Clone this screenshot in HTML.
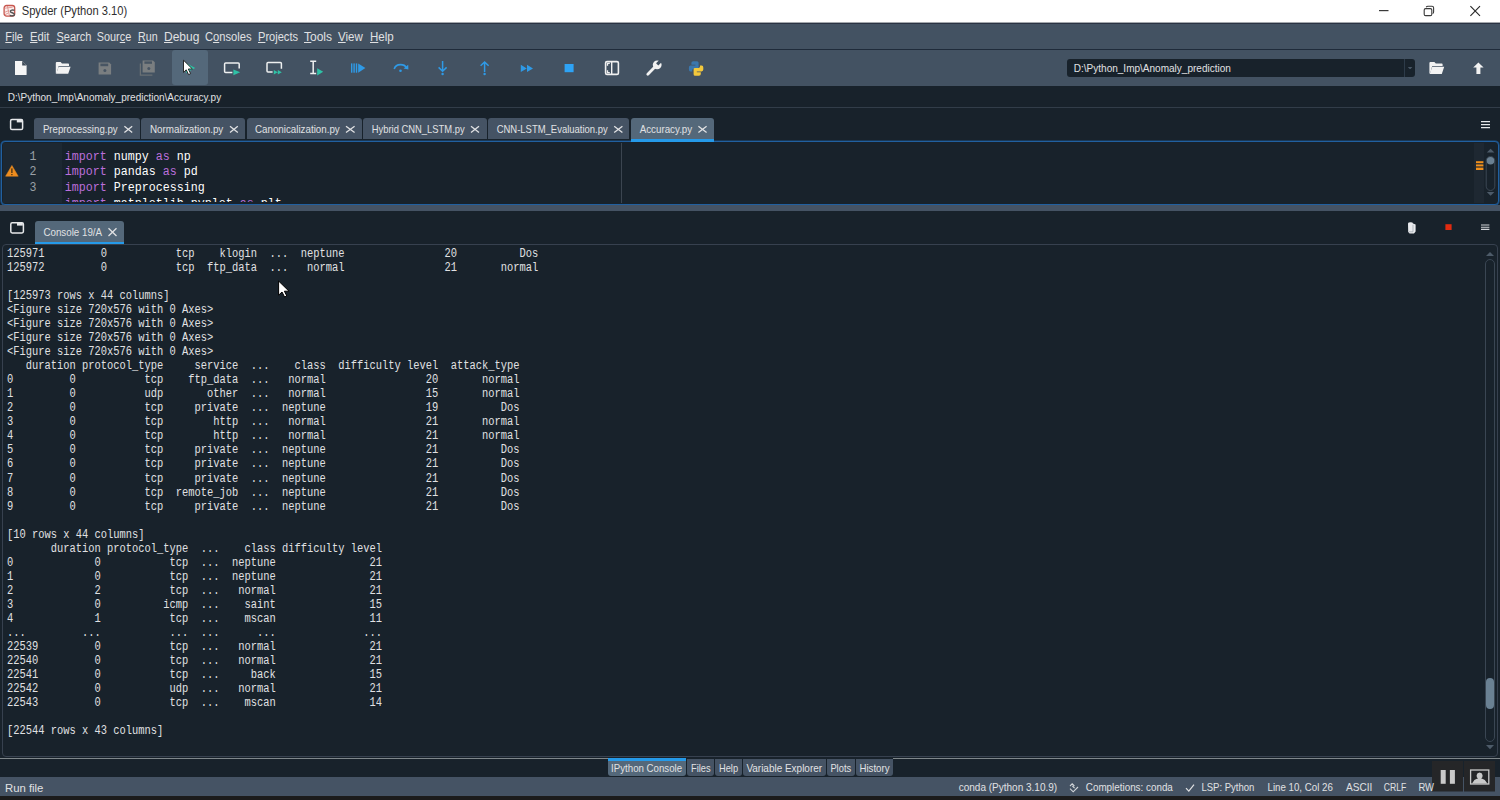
<!DOCTYPE html>
<html><head><meta charset="utf-8">
<title>Spyder (Python 3.10)</title>
<style>
*{margin:0;padding:0;box-sizing:border-box}
html,body{width:1500px;height:800px;overflow:hidden;background:#18222B;font-family:"Liberation Sans",sans-serif;color:#E0E1E3;position:relative}
.a{position:absolute}
.tab{position:absolute;top:118px;height:21px;background:#455364;border-radius:3px 3px 0 0}
svg{position:absolute;left:0;top:0}
text{font-family:"Liberation Sans",sans-serif;white-space:pre}
text.m{font-family:"Liberation Mono",monospace;font-size:12px;fill:#E0E1E3}
text.c{font-family:"Liberation Mono",monospace;font-size:12px}
</style></head><body>
<!-- title bar -->
<div class="a" style="left:0;top:0;width:1500px;height:22px;background:#fff"></div>
<div class="a" style="left:0;top:22px;width:1500px;height:1px;background:#a4a8ad"></div>
<div class="a" style="left:0;top:23px;width:1500px;height:1px;background:#2a3343"></div>
<!-- menubar -->
<div class="a" style="left:0;top:24px;width:1500px;height:25px;background:#435262"></div>
<div class="a" style="left:0;top:49px;width:1500px;height:1px;background:#1f2b3a"></div>
<!-- toolbar -->
<div class="a" style="left:0;top:50px;width:1500px;height:36px;background:#435262"></div>
<div class="a" style="left:172px;top:50px;width:36px;height:35px;background:#54687A;border-radius:3px"></div>
<div class="a" style="left:1067px;top:59px;width:348px;height:18px;background:#18222B;border-radius:3px"></div>
<div class="a" style="left:1404px;top:59px;width:1px;height:18px;background:#2d3b49"></div>
<!-- path sep -->
<div class="a" style="left:0;top:107px;width:1500px;height:1px;background:#323d49"></div>

<!-- editor tabs -->
<div class="tab" style="left:34px;width:106px"></div>
<div class="tab" style="left:141px;width:104px"></div>
<div class="tab" style="left:247px;width:115px"></div>
<div class="tab" style="left:363px;width:124px"></div>
<div class="tab" style="left:488px;width:141px"></div>
<div class="tab" style="left:631px;width:83px;height:22px;background:#54687A"></div>

<!-- editor -->
<div class="a" style="left:1px;top:141px;width:1498px;height:64px;border:1px solid #2160a0;box-shadow:0 0 0 0.6px #1b4f82;border-radius:4px;background:#18222B;overflow:hidden">
  <div class="a" style="left:1px;top:1px;width:59px;height:60px;background:#1d2832"></div>
  <div class="a" style="left:1472px;top:1px;width:10px;height:60px;background:#1e2832"></div>
  <div class="a" style="left:619px;top:1px;width:1px;height:60px;background:#3b4550"></div>
</div>

<div class="a" style="left:631px;top:138.6px;width:83px;height:3.2px;background:#259AE9"></div>
<!-- splitter -->
<div class="a" style="left:0;top:205px;width:1500px;height:6px;background:#455364"></div>

<!-- console tab -->
<div class="a" style="left:35px;top:221px;width:89px;height:24px;background:#54687A;border-radius:3px 3px 0 0"></div>
<div class="a" style="left:35px;top:242px;width:89px;height:3px;background:#259AE9"></div>

<!-- console pane -->
<div class="a" style="left:2px;top:244px;width:1496px;height:513px;border:1px solid #37414F;border-radius:4px"></div>
<!-- scrollbar -->
<div class="a" style="left:1485px;top:259px;width:10px;height:483px;border:1px solid #3a4653;border-radius:5px"></div>
<div class="a" style="left:1486px;top:678px;width:8px;height:31px;background:#6a8193;border-radius:4px"></div>

<!-- dock tabs -->
<div class="a" style="left:0;top:758px;width:1500px;height:1px;background:#7f878b"></div>
<div class="a" style="left:608px;top:758px;width:78px;height:17.5px;background:#54687A;border-radius:0 0 3px 3px"></div>
<div class="a" style="left:608px;top:758px;width:78px;height:2.5px;background:#259AE9"></div>
<div class="a" style="left:687px;top:759px;width:27px;height:17px;background:#455364;border-radius:0 0 3px 3px"></div>
<div class="a" style="left:715px;top:759px;width:27px;height:17px;background:#455364;border-radius:0 0 3px 3px"></div>
<div class="a" style="left:743px;top:759px;width:83px;height:17px;background:#455364;border-radius:0 0 3px 3px"></div>
<div class="a" style="left:827px;top:759px;width:28px;height:17px;background:#455364;border-radius:0 0 3px 3px"></div>
<div class="a" style="left:856px;top:759px;width:37px;height:17px;background:#455364;border-radius:0 0 3px 3px"></div>
<div class="a" style="left:686px;top:758px;width:207px;height:1px;background:#18222B"></div>

<!-- status -->
<div class="a" style="left:0;top:777px;width:1500px;height:19px;background:#455364"></div>
<div class="a" style="left:0;top:796px;width:1500px;height:4px;background:#1c1c1c"></div>

<svg width="1500" height="800" viewBox="0 0 1500 800">
<defs>
<clipPath id="edclip"><rect x="2" y="142" width="617" height="60"/></clipPath>
</defs>
<!-- spyder logo -->
<rect x="4.1" y="5.5" width="10.6" height="10.6" rx="2.4" fill="#fbeeed" stroke="#c8574f" stroke-width="1.3"/>
<path d="M5,8.2 L12.6,7.2 M7.4,6 L9.4,15.6 M5,12.2 L9.2,10.4 M5,14.6 L8.4,13" stroke="#dc8a84" stroke-width="0.8" fill="none"/>
<path d="M14.6,10.4 C12.8,9.6 10.2,10 10.4,11.6 C10.6,13 14.4,12.6 14.4,14.4 C14.4,16 11.6,16.2 9.8,15.4" stroke="#555" stroke-width="1.4" fill="none"/>
<!-- window controls -->
<rect x="1379" y="10" width="9.5" height="1.2" fill="#3a3a3a"/>
<rect x="1424.2" y="8.6" width="7.6" height="7" rx="1.4" fill="none" stroke="#3a3a3a" stroke-width="1.1"/>
<path d="M1426.2,7.2 Q1426.6,6.2 1428,6.2 L1432,6.2 Q1433.6,6.2 1433.6,7.8 L1433.6,12 Q1433.6,13.2 1432.6,13.6" fill="none" stroke="#3a3a3a" stroke-width="1.1"/>
<path d="M1470.4,6.2 L1480,15.8 M1480,6.2 L1470.4,15.8" stroke="#2a2a2a" stroke-width="1.15"/>

<!-- toolbar: new file -->
<path d="M15,61 L22.2,61 L26.6,65.4 L26.6,74.4 Q26.6,75 26,75 L15.6,75 Q15,75 15,74.4 Z" fill="#f5f5f5"/>
<path d="M22.2,61 L26.6,65.4 L22.2,65.4 Z" fill="#3f4b58"/>
<!-- open folder -->
<path d="M55.8,63 Q55.8,62 56.8,62 L60.6,62 L62,63.4 L68.2,63.4 Q69,63.4 69,64.2 L69,66 L58.6,66 L56.6,73.4 L55.8,73.4 Z" fill="#f2f2f2"/>
<path d="M58.6,66.8 L70.6,66.8 L68.2,73.8 L56.2,73.8 Z" fill="#f2f2f2"/>
<!-- save (disabled) -->
<path d="M98.6,62.6 L109.2,62.6 L111.1,64.5 L111.1,74.4 L98.6,74.4 Z" fill="#7a7e80"/>
<rect x="100.4" y="63.6" width="7.8" height="2.6" fill="#485563"/>
<circle cx="104.9" cy="70.6" r="1.5" fill="#485563"/>
<!-- save all (disabled) -->
<path d="M142.6,60.4 L153,60.4 L154.8,62.2 L154.8,72.6 L142.6,72.6 Z" fill="#7a7e80"/>
<rect x="144.4" y="61.4" width="7.6" height="2.4" fill="#485563"/>
<circle cx="148.8" cy="68.4" r="1.5" fill="#485563"/>
<path d="M140.4,63.6 L140.4,75.2 L152.4,75.2" fill="none" stroke="#6a7074" stroke-width="1.3"/>
<!-- run file (with mouse cursor) -->
<path d="M186,63 L195.2,68 L186,73 Z" fill="#2fc1a6"/>
<path d="M183.5,60.2 L183.5,72.4 L186.2,69.8 L188.6,74.6 L190.6,73.6 L188.3,69 L192.4,69 Z" fill="#ffffff" stroke="#1a1a1a" stroke-width="0.9" stroke-linejoin="round"/>
<!-- run cell -->
<path d="M232.4,72.6 L225.6,72.6 Q224.6,72.6 224.6,71.6 L224.6,63.9 Q224.6,62.9 225.6,62.9 L238.2,62.9 Q239.2,62.9 239.2,63.9 L239.2,68.4" fill="none" stroke="#eef0f0" stroke-width="1.5"/>
<path d="M233.4,69.4 L240.2,72.3 L233.4,75.2 Z" fill="#2fc1a6"/>
<!-- run cell & advance -->
<path d="M272.6,71.9 L268,71.9 Q267,71.9 267,70.9 L267,63.5 Q267,62.5 268,62.5 L280.4,62.5 Q281.4,62.5 281.4,63.5 L281.4,68.8" fill="none" stroke="#eef0f0" stroke-width="1.5"/>
<path d="M273.8,70 L277.8,72.3 L273.8,74.6 Z M277.8,70 L281.8,72.3 L277.8,74.6 Z" fill="#2fc1a6"/>
<!-- run selection -->
<path d="M310.2,61.2 L316.2,61.2 M313.2,61.2 L313.2,73.6 M310.2,73.6 L316.2,73.6" fill="none" stroke="#eef0f0" stroke-width="1.5"/>
<path d="M317.2,68.2 L323.2,71.8 L317.2,75.4 Z" fill="#2fc1a6"/>
<!-- debug file -->
<rect x="351" y="63.4" width="1.4" height="9.3" fill="#2f9ae6"/>
<rect x="353.4" y="63.4" width="1.4" height="9.3" fill="#2f9ae6"/>
<rect x="355.8" y="63.4" width="1.4" height="9.3" fill="#2f9ae6"/>
<path d="M358.2,63.4 L365.4,68 L358.2,72.7 Z" fill="#2f9ae6"/>
<!-- step over -->
<path d="M394.2,69 Q395.4,64.6 400.6,64.6 Q404.8,64.6 406.4,67.6" fill="none" stroke="#2f9ae6" stroke-width="1.6"/>
<path d="M403.6,68.4 L408.4,69.6 L408.2,64.8 Z" fill="#2f9ae6"/>
<circle cx="400.5" cy="70.8" r="1.3" fill="#2f9ae6"/>
<!-- step into -->
<path d="M442.6,61 L442.6,71.2 M438.6,67.4 L442.6,71.2 L446.6,67.4" fill="none" stroke="#2f9ae6" stroke-width="1.5"/>
<circle cx="442.6" cy="74" r="1.2" fill="#2f9ae6"/>
<!-- step return -->
<path d="M484.6,62 L484.6,72 M480.6,65.8 L484.6,62 L488.6,65.8" fill="none" stroke="#2f9ae6" stroke-width="1.5"/>
<circle cx="484.6" cy="74" r="1.2" fill="#2f9ae6"/>
<!-- continue -->
<path d="M520.8,64.7 L526.8,68.4 L520.8,72.1 Z M527,64.7 L533,68.4 L527,72.1 Z" fill="#2f9ae6"/>
<!-- stop -->
<rect x="564.6" y="64" width="9" height="8.2" fill="#2ea3f5"/>
<!-- maximize pane -->
<rect x="605.6" y="61.6" width="12.8" height="12.8" rx="1.4" fill="none" stroke="#f0f0f0" stroke-width="1.6"/>
<rect x="611" y="61.6" width="1.4" height="12.8" fill="#f0f0f0"/>
<path d="M609.8,63.4 L607.5,63.4 L607.5,65.8 M607.5,70.2 L607.5,72.6 L609.8,72.6" fill="none" stroke="#f0f0f0" stroke-width="1.3"/>
<!-- wrench -->
<path d="M647.8,74.2 L654.4,67.6" stroke="#f2f2f2" stroke-width="2.8" stroke-linecap="round"/>
<circle cx="657.2" cy="64.8" r="4.4" fill="#f2f2f2"/>
<rect x="657.6" y="59.6" width="3.2" height="5.6" fill="#435262" transform="rotate(45 659.2 62.4)"/>
<!-- python logo -->
<path d="M691.4,63 Q691.4,61.2 693.2,61.2 L697,61.2 Q698.6,61.2 698.6,62.8 L698.6,67.6 Q698.6,69 697.2,69 L693.6,69 Q692.2,69 692.2,70.4 L692.2,71.6 L690.4,71.6 Q688.9,71.6 688.9,69.6 L688.9,67.4 Q688.9,65.6 690.6,65.6 L695.4,65.6 L695.4,64.8 L691.4,64.8 Z" fill="#3b77ad"/>
<path d="M700.8,74 Q700.8,75.8 699,75.8 L695.2,75.8 Q693.6,75.8 693.6,74.2 L693.6,69.4 Q693.6,68 695,68 L698.6,68 Q700,68 700,66.6 L700,65.4 L701.8,65.4 Q703.3,65.4 703.3,67.4 L703.3,69.6 Q703.3,71.4 701.6,71.4 L696.8,71.4 L696.8,72.2 L700.8,72.2 Z" fill="#f3c83c"/>
<!-- cwd dropdown arrow -->
<path d="M1407.8,67.2 L1412.4,67.2 L1410.1,69 Z" fill="#5a6a7a"/>
<!-- browse folder -->
<path d="M1429.4,63 Q1429.4,62 1430.4,62 L1434.4,62 L1435.8,63.4 L1441.8,63.4 Q1442.6,63.4 1442.6,64.2 L1442.6,66 L1432.2,66 L1430.2,73.6 L1429.4,73.6 Z" fill="#f2f2f2"/>
<path d="M1432.2,66.8 L1444.2,66.8 L1441.8,74 L1429.8,74 Z" fill="#f2f2f2"/>
<!-- parent dir arrow -->
<path d="M1478.4,62.4 L1483.6,67.6 L1480.4,67.6 L1480.4,74 L1476.4,74 L1476.4,67.6 L1473.2,67.6 Z" fill="#f2f2f2"/>

<!-- editor tabbar: pane icon -->
<rect x="10.6" y="119.6" width="12" height="10" rx="1.4" fill="none" stroke="#e6e8ea" stroke-width="1.5"/>
<rect x="16.8" y="119.8" width="5.6" height="2.6" fill="#e6e8ea"/>
<!-- tab close X -->
<g stroke="#E0E1E3" stroke-width="1.3" fill="none">
<path d="M124.4,126.2 L132.2,132.6 M132.2,126.2 L124.4,132.6"/>
<path d="M230,126.2 L237.8,132.6 M237.8,126.2 L230,132.6"/>
<path d="M346,126.2 L354.6,132.6 M354.6,126.2 L346,132.6"/>
<path d="M471,126.2 L479,132.6 M479,126.2 L471,132.6"/>
<path d="M614.2,126.2 L622.4,132.6 M622.4,126.2 L614.2,132.6"/>
<path d="M698.4,126.2 L706.6,132.6 M706.6,126.2 L698.4,132.6"/>
<path d="M108.5,228.2 L116.5,236 M116.5,228.2 L108.5,236"/>
</g>
<!-- editor hamburger -->
<path d="M1481,121.6 L1490,121.6 M1481,124.6 L1490,124.6 M1481,127.6 L1490,127.6" stroke="#e6e8ea" stroke-width="1.2"/>
<!-- warning triangle -->
<path d="M11.9,165.4 L18.2,176.2 L5.6,176.2 Z" fill="#ee8d1f" stroke="#ee8d1f" stroke-width="0.5" stroke-linejoin="round"/>
<rect x="11.3" y="168.4" width="1.2" height="4.6" fill="#3a2a10"/>
<rect x="11.3" y="174" width="1.2" height="1.2" fill="#3a2a10"/>
<!-- editor scroll flags -->
<rect x="1476" y="161.2" width="7.4" height="2" fill="#f0901c"/>
<rect x="1476" y="164.4" width="7.4" height="2" fill="#f0901c"/>
<rect x="1476" y="167.6" width="7.4" height="2.4" fill="#f0901c"/>
<!-- editor scrollbar -->
<path d="M1486.8,152.6 L1490.6,148.8 L1494.4,152.6 Z" fill="#4d5b69"/>
<path d="M1486.8,192 L1490.6,195.8 L1494.4,192 Z" fill="#4d5b69"/>
<rect x="1486.2" y="156.5" width="8.6" height="34" rx="4.3" fill="none" stroke="#3c4855" stroke-width="1"/>
<circle cx="1490.5" cy="160.8" r="3.8" fill="#6a8092"/>

<!-- console header icons -->
<rect x="10.8" y="222.8" width="12.6" height="10.2" rx="1.4" fill="none" stroke="#e6e8ea" stroke-width="1.5"/>
<rect x="17" y="223" width="5.8" height="2.6" fill="#e6e8ea"/>
<path d="M1408,223.6 Q1408,222.2 1410.6,222.2 Q1413,222.2 1413,223.4 L1415.6,224.6 L1415.6,231.6 L1414,233.4 L1409.6,233.4 L1408.2,232 Z" fill="#e9ebee"/>
<path d="M1413,224.8 L1413,231.8 L1409,231.8" fill="none" stroke="#9aa2aa" stroke-width="0.7"/>
<rect x="1445.4" y="224.2" width="6.2" height="5.8" fill="#e02b10"/>
<path d="M1481,225 L1489.4,225 M1481,227.2 L1489.4,227.2 M1481,229.4 L1489.4,229.4" stroke="#cfd3d7" stroke-width="1.1"/>

<!-- console scrollbar arrows -->
<path d="M1486,256 L1490,252 L1494,256 Z" fill="#4d5b69"/>
<path d="M1486,745 L1490,749.2 L1494,745 Z" fill="#4d5b69"/>

<!-- mouse cursor -->
<path d="M278.6,281 L278.6,295.2 L282,292 L284.6,297 L286.8,296 L284.4,291.2 L289,291.2 Z" fill="#ffffff" stroke="#000" stroke-width="1" stroke-linejoin="round"/>

<!-- status icons -->
<path d="M1070,786 L1072.2,783.8 L1074.4,786 M1074.6,788.2 L1072.4,786 M1070,788.6 L1073.2,791.8 L1078,787" fill="none" stroke="#d0d4d8" stroke-width="1.1"/>
<path d="M1186,788.2 L1188.8,791.2 L1194,784.6" fill="none" stroke="#e0e1e3" stroke-width="1.2"/>
<!-- overlay buttons -->
<rect x="1432" y="761" width="31" height="30.5" fill="#252628"/>
<rect x="1464" y="761" width="31" height="30.5" fill="#252628"/>
<rect x="1440.7" y="770" width="5" height="13.8" fill="#c9c9c9"/>
<rect x="1449.9" y="770" width="5" height="13.8" fill="#c9c9c9"/>
<rect x="1470.6" y="770" width="18.2" height="14" fill="none" stroke="#c9c9c9" stroke-width="1.3"/>
<path d="M1472,783.4 L1474.4,780 Q1476.4,778.8 1478,778.6 Q1476.4,777.4 1476.6,775.2 Q1477,772.6 1479.6,772.6 Q1482.2,772.6 1482.6,775.2 Q1482.8,777.4 1481.2,778.6 Q1482.8,778.8 1484.8,780 L1487.4,783.4 Z" fill="#c9c9c9"/>

<text x="21.70" y="15.4" font-size="12" fill="#2e2e2e" textLength="105.50" lengthAdjust="spacingAndGlyphs">Spyder (Python 3.10)</text>
<text x="5.30" y="40.7" font-size="12" fill="#E0E1E3" textLength="17.60" lengthAdjust="spacingAndGlyphs">File</text>
<text x="30.00" y="40.7" font-size="12" fill="#E0E1E3" textLength="19.38" lengthAdjust="spacingAndGlyphs">Edit</text>
<text x="56.50" y="40.7" font-size="12" fill="#E0E1E3" textLength="34.82" lengthAdjust="spacingAndGlyphs">Search</text>
<text x="96.80" y="40.7" font-size="12" fill="#E0E1E3" textLength="34.40" lengthAdjust="spacingAndGlyphs">Source</text>
<text x="138.00" y="40.7" font-size="12" fill="#E0E1E3" textLength="19.60" lengthAdjust="spacingAndGlyphs">Run</text>
<text x="164.00" y="40.7" font-size="12" fill="#E0E1E3" textLength="35.37" lengthAdjust="spacingAndGlyphs">Debug</text>
<text x="205.00" y="40.7" font-size="12" fill="#E0E1E3" textLength="46.50" lengthAdjust="spacingAndGlyphs">Consoles</text>
<text x="258.00" y="40.7" font-size="12" fill="#E0E1E3" textLength="40.00" lengthAdjust="spacingAndGlyphs">Projects</text>
<text x="304.00" y="40.7" font-size="12" fill="#E0E1E3" textLength="28.00" lengthAdjust="spacingAndGlyphs">Tools</text>
<text x="338.00" y="40.7" font-size="12" fill="#E0E1E3" textLength="24.68" lengthAdjust="spacingAndGlyphs">View</text>
<text x="370.00" y="40.7" font-size="12" fill="#E0E1E3" textLength="23.69" lengthAdjust="spacingAndGlyphs">Help</text>
<text x="7.70" y="101.2" font-size="11" fill="#E0E1E3" textLength="213.45" lengthAdjust="spacingAndGlyphs">D:\Python_Imp\Anomaly_prediction\Accuracy.py</text>
<text x="1073.80" y="71.8" font-size="10.5" fill="#E0E1E3" textLength="157.05" lengthAdjust="spacingAndGlyphs">D:\Python_Imp\Anomaly_prediction</text>
<text x="42.90" y="133.3" font-size="11.3" fill="#E0E1E3" textLength="74.80" lengthAdjust="spacingAndGlyphs">Preprocessing.py</text>
<text x="150.00" y="133.3" font-size="11.3" fill="#E0E1E3" textLength="73.29" lengthAdjust="spacingAndGlyphs">Normalization.py</text>
<text x="255.00" y="133.3" font-size="11.3" fill="#E0E1E3" textLength="84.70" lengthAdjust="spacingAndGlyphs">Canonicalization.py</text>
<text x="371.70" y="133.3" font-size="11.3" fill="#E0E1E3" textLength="93.01" lengthAdjust="spacingAndGlyphs">Hybrid CNN_LSTM.py</text>
<text x="496.70" y="133.3" font-size="11.3" fill="#E0E1E3" textLength="111.01" lengthAdjust="spacingAndGlyphs">CNN-LSTM_Evaluation.py</text>
<text x="639.70" y="133.3" font-size="11.3" fill="#E0E1E3" textLength="52.50" lengthAdjust="spacingAndGlyphs">Accuracy.py</text>
<text x="43.40" y="236" font-size="11" fill="#E0E1E3" textLength="58.71" lengthAdjust="spacingAndGlyphs">Console 19/A</text>
<text x="611.12" y="772" font-size="11" fill="#E0E1E3" textLength="70.98" lengthAdjust="spacingAndGlyphs">IPython Console</text>
<text x="691.00" y="772" font-size="11" fill="#E0E1E3" textLength="19.58" lengthAdjust="spacingAndGlyphs">Files</text>
<text x="719.00" y="772" font-size="11" fill="#E0E1E3" textLength="19.10" lengthAdjust="spacingAndGlyphs">Help</text>
<text x="746.40" y="772" font-size="11" fill="#E0E1E3" textLength="75.69" lengthAdjust="spacingAndGlyphs">Variable Explorer</text>
<text x="830.40" y="772" font-size="11" fill="#E0E1E3" textLength="20.78" lengthAdjust="spacingAndGlyphs">Plots</text>
<text x="859.40" y="772" font-size="11" fill="#E0E1E3" textLength="30.16" lengthAdjust="spacingAndGlyphs">History</text>
<text x="5.00" y="792" font-size="11" fill="#E0E1E3" textLength="38.42" lengthAdjust="spacingAndGlyphs">Run file</text>
<text x="958.70" y="791.3" font-size="10.5" fill="#E0E1E3" textLength="98.47" lengthAdjust="spacingAndGlyphs">conda (Python 3.10.9)</text>
<text x="1085.80" y="791.3" font-size="10.5" fill="#E0E1E3" textLength="87.05" lengthAdjust="spacingAndGlyphs">Completions: conda</text>
<text x="1201.40" y="791.3" font-size="10.5" fill="#E0E1E3" textLength="52.95" lengthAdjust="spacingAndGlyphs">LSP: Python</text>
<text x="1267.50" y="791.3" font-size="10.5" fill="#E0E1E3" textLength="65.35" lengthAdjust="spacingAndGlyphs">Line 10, Col 26</text>
<text x="1346.00" y="791.3" font-size="10.5" fill="#E0E1E3" textLength="26.28" lengthAdjust="spacingAndGlyphs">ASCII</text>
<text x="1383.80" y="791.3" font-size="10.5" fill="#E0E1E3" textLength="22.54" lengthAdjust="spacingAndGlyphs">CRLF</text>
<text x="1418.40" y="791.3" font-size="10.5" fill="#E0E1E3" textLength="15.52" lengthAdjust="spacingAndGlyphs">RW</text>
<rect x="5.30" y="42" width="6.67" height="1" fill="#E0E1E3"/>
<rect x="30.00" y="42" width="7.50" height="1" fill="#E0E1E3"/>
<rect x="56.50" y="42" width="7.33" height="1" fill="#E0E1E3"/>
<rect x="119.74" y="42" width="5.43" height="1" fill="#E0E1E3"/>
<rect x="138.00" y="42" width="7.72" height="1" fill="#E0E1E3"/>
<rect x="164.00" y="42" width="8.67" height="1" fill="#E0E1E3"/>
<rect x="213.05" y="42" width="6.20" height="1" fill="#E0E1E3"/>
<rect x="258.00" y="42" width="7.39" height="1" fill="#E0E1E3"/>
<rect x="304.00" y="42" width="7.33" height="1" fill="#E0E1E3"/>
<rect x="338.00" y="42" width="7.66" height="1" fill="#E0E1E3"/>
<rect x="370.00" y="42" width="8.32" height="1" fill="#E0E1E3"/>
<text x="7" y="256.7" class="m" textLength="531.25" lengthAdjust="spacingAndGlyphs" xml:space="preserve">125971         0           tcp    klogin  ...  neptune                20          Dos</text>
<text x="7" y="270.8" class="m" textLength="531.25" lengthAdjust="spacingAndGlyphs" xml:space="preserve">125972         0           tcp  ftp_data  ...   normal                21       normal</text>
<text x="7" y="298.9" class="m" textLength="162.50" lengthAdjust="spacingAndGlyphs" xml:space="preserve">[125973 rows x 44 columns]</text>
<text x="7" y="312.9" class="m" textLength="206.25" lengthAdjust="spacingAndGlyphs" xml:space="preserve">&lt;Figure size 720x576 with 0 Axes&gt;</text>
<text x="7" y="326.9" class="m" textLength="206.25" lengthAdjust="spacingAndGlyphs" xml:space="preserve">&lt;Figure size 720x576 with 0 Axes&gt;</text>
<text x="7" y="341.0" class="m" textLength="206.25" lengthAdjust="spacingAndGlyphs" xml:space="preserve">&lt;Figure size 720x576 with 0 Axes&gt;</text>
<text x="7" y="355.1" class="m" textLength="206.25" lengthAdjust="spacingAndGlyphs" xml:space="preserve">&lt;Figure size 720x576 with 0 Axes&gt;</text>
<text x="7" y="369.1" class="m" textLength="512.50" lengthAdjust="spacingAndGlyphs" xml:space="preserve">   duration protocol_type     service  ...    class  difficulty level  attack_type</text>
<text x="7" y="383.1" class="m" textLength="512.50" lengthAdjust="spacingAndGlyphs" xml:space="preserve">0         0           tcp    ftp_data  ...   normal                20       normal</text>
<text x="7" y="397.2" class="m" textLength="512.50" lengthAdjust="spacingAndGlyphs" xml:space="preserve">1         0           udp       other  ...   normal                15       normal</text>
<text x="7" y="411.2" class="m" textLength="512.50" lengthAdjust="spacingAndGlyphs" xml:space="preserve">2         0           tcp     private  ...  neptune                19          Dos</text>
<text x="7" y="425.3" class="m" textLength="512.50" lengthAdjust="spacingAndGlyphs" xml:space="preserve">3         0           tcp        http  ...   normal                21       normal</text>
<text x="7" y="439.4" class="m" textLength="512.50" lengthAdjust="spacingAndGlyphs" xml:space="preserve">4         0           tcp        http  ...   normal                21       normal</text>
<text x="7" y="453.4" class="m" textLength="512.50" lengthAdjust="spacingAndGlyphs" xml:space="preserve">5         0           tcp     private  ...  neptune                21          Dos</text>
<text x="7" y="467.4" class="m" textLength="512.50" lengthAdjust="spacingAndGlyphs" xml:space="preserve">6         0           tcp     private  ...  neptune                21          Dos</text>
<text x="7" y="481.5" class="m" textLength="512.50" lengthAdjust="spacingAndGlyphs" xml:space="preserve">7         0           tcp     private  ...  neptune                21          Dos</text>
<text x="7" y="495.6" class="m" textLength="512.50" lengthAdjust="spacingAndGlyphs" xml:space="preserve">8         0           tcp  remote_job  ...  neptune                21          Dos</text>
<text x="7" y="509.6" class="m" textLength="512.50" lengthAdjust="spacingAndGlyphs" xml:space="preserve">9         0           tcp     private  ...  neptune                21          Dos</text>
<text x="7" y="537.7" class="m" textLength="137.50" lengthAdjust="spacingAndGlyphs" xml:space="preserve">[10 rows x 44 columns]</text>
<text x="7" y="551.8" class="m" textLength="375.00" lengthAdjust="spacingAndGlyphs" xml:space="preserve">       duration protocol_type  ...    class difficulty level</text>
<text x="7" y="565.8" class="m" textLength="375.00" lengthAdjust="spacingAndGlyphs" xml:space="preserve">0             0           tcp  ...  neptune               21</text>
<text x="7" y="579.9" class="m" textLength="375.00" lengthAdjust="spacingAndGlyphs" xml:space="preserve">1             0           tcp  ...  neptune               21</text>
<text x="7" y="593.9" class="m" textLength="375.00" lengthAdjust="spacingAndGlyphs" xml:space="preserve">2             2           tcp  ...   normal               21</text>
<text x="7" y="608.0" class="m" textLength="375.00" lengthAdjust="spacingAndGlyphs" xml:space="preserve">3             0          icmp  ...    saint               15</text>
<text x="7" y="622.0" class="m" textLength="375.00" lengthAdjust="spacingAndGlyphs" xml:space="preserve">4             1           tcp  ...    mscan               11</text>
<text x="7" y="636.0" class="m" textLength="375.00" lengthAdjust="spacingAndGlyphs" xml:space="preserve">...         ...           ...  ...      ...              ...</text>
<text x="7" y="650.1" class="m" textLength="375.00" lengthAdjust="spacingAndGlyphs" xml:space="preserve">22539         0           tcp  ...   normal               21</text>
<text x="7" y="664.2" class="m" textLength="375.00" lengthAdjust="spacingAndGlyphs" xml:space="preserve">22540         0           tcp  ...   normal               21</text>
<text x="7" y="678.2" class="m" textLength="375.00" lengthAdjust="spacingAndGlyphs" xml:space="preserve">22541         0           tcp  ...     back               15</text>
<text x="7" y="692.2" class="m" textLength="375.00" lengthAdjust="spacingAndGlyphs" xml:space="preserve">22542         0           udp  ...   normal               21</text>
<text x="7" y="706.3" class="m" textLength="375.00" lengthAdjust="spacingAndGlyphs" xml:space="preserve">22543         0           tcp  ...    mscan               14</text>
<text x="7" y="734.4" class="m" textLength="156.25" lengthAdjust="spacingAndGlyphs" xml:space="preserve">[22544 rows x 43 columns]</text>
<text x="29.6" y="159.8" class="c" fill="#9aa0a6" textLength="6.95" lengthAdjust="spacingAndGlyphs">1</text>
<text x="29.6" y="175.4" class="c" fill="#9aa0a6" textLength="6.95" lengthAdjust="spacingAndGlyphs">2</text>
<text x="29.6" y="191.0" class="c" fill="#9aa0a6" textLength="6.95" lengthAdjust="spacingAndGlyphs">3</text>
<g clip-path="url(#edclip)">
<text x="64.80" y="159.8" class="c" fill="#bb6fdb" textLength="42.00" lengthAdjust="spacingAndGlyphs" xml:space="preserve">import</text>
<text x="106.80" y="159.8" class="c" fill="#ffffff" textLength="49.00" lengthAdjust="spacingAndGlyphs" xml:space="preserve"> numpy </text>
<text x="155.80" y="159.8" class="c" fill="#bb6fdb" textLength="14.00" lengthAdjust="spacingAndGlyphs" xml:space="preserve">as</text>
<text x="169.80" y="159.8" class="c" fill="#ffffff" textLength="21.00" lengthAdjust="spacingAndGlyphs" xml:space="preserve"> np</text>
<text x="64.80" y="175.4" class="c" fill="#bb6fdb" textLength="42.00" lengthAdjust="spacingAndGlyphs" xml:space="preserve">import</text>
<text x="106.80" y="175.4" class="c" fill="#ffffff" textLength="56.00" lengthAdjust="spacingAndGlyphs" xml:space="preserve"> pandas </text>
<text x="162.80" y="175.4" class="c" fill="#bb6fdb" textLength="14.00" lengthAdjust="spacingAndGlyphs" xml:space="preserve">as</text>
<text x="176.80" y="175.4" class="c" fill="#ffffff" textLength="21.00" lengthAdjust="spacingAndGlyphs" xml:space="preserve"> pd</text>
<text x="64.80" y="191.0" class="c" fill="#bb6fdb" textLength="42.00" lengthAdjust="spacingAndGlyphs" xml:space="preserve">import</text>
<text x="106.80" y="191.0" class="c" fill="#ffffff" textLength="98.00" lengthAdjust="spacingAndGlyphs" xml:space="preserve"> Preprocessing</text>
<text x="64.80" y="206.6" class="c" fill="#bb6fdb" textLength="42.00" lengthAdjust="spacingAndGlyphs" xml:space="preserve">import</text>
<text x="106.80" y="206.6" class="c" fill="#ffffff" textLength="133.00" lengthAdjust="spacingAndGlyphs" xml:space="preserve"> matplotlib.pyplot </text>
<text x="239.80" y="206.6" class="c" fill="#bb6fdb" textLength="14.00" lengthAdjust="spacingAndGlyphs" xml:space="preserve">as</text>
<text x="253.80" y="206.6" class="c" fill="#ffffff" textLength="28.00" lengthAdjust="spacingAndGlyphs" xml:space="preserve"> plt</text>
</g>
</svg>
</body></html>
